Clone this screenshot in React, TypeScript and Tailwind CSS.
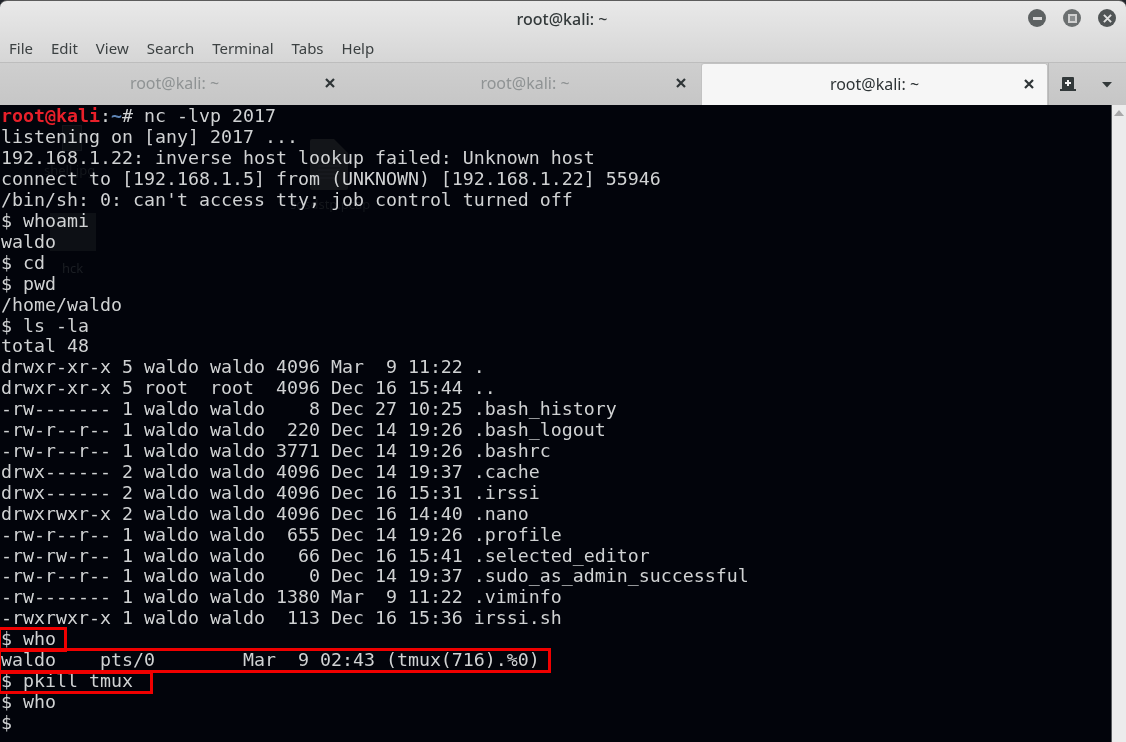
const lines: string[] = [
  "listening on [any] 2017 ...",
  "192.168.1.22: inverse host lookup failed: Unknown host",
  "connect to [192.168.1.5] from (UNKNOWN) [192.168.1.22] 55946",
  "/bin/sh: 0: can't access tty; job control turned off",
  "$ whoami",
  "waldo",
  "$ cd",
  "$ pwd",
  "/home/waldo",
  "$ ls -la",
  "total 48",
  "drwxr-xr-x 5 waldo waldo 4096 Mar  9 11:22 .",
  "drwxr-xr-x 5 root  root  4096 Dec 16 15:44 ..",
  "-rw------- 1 waldo waldo    8 Dec 27 10:25 .bash_history",
  "-rw-r--r-- 1 waldo waldo  220 Dec 14 19:26 .bash_logout",
  "-rw-r--r-- 1 waldo waldo 3771 Dec 14 19:26 .bashrc",
  "drwx------ 2 waldo waldo 4096 Dec 14 19:37 .cache",
  "drwx------ 2 waldo waldo 4096 Dec 16 15:31 .irssi",
  "drwxrwxr-x 2 waldo waldo 4096 Dec 16 14:40 .nano",
  "-rw-r--r-- 1 waldo waldo  655 Dec 14 19:26 .profile",
  "-rw-rw-r-- 1 waldo waldo   66 Dec 16 15:41 .selected_editor",
  "-rw-r--r-- 1 waldo waldo    0 Dec 14 19:37 .sudo_as_admin_successful",
  "-rw------- 1 waldo waldo 1380 Mar  9 11:22 .viminfo",
  "-rwxrwxr-x 1 waldo waldo  113 Dec 16 15:36 irssi.sh",
  "$ who",
  "waldo    pts/0        Mar  9 02:43 (tmux(716).%0)",
  "$ pkill tmux",
  "$ who",
  "$",
];

function Tab({ active, width, closeRight, textPad }: { active?: boolean; width: string; closeRight: string; textPad: string }) {
  return (
    <div className={`${width} h-full flex items-center relative ${active ? "bg-[#f6f6f6] text-[#2e3436] rounded-t-[3px] border-x border-t border-[#c2c2c2]" : "text-[#8f9394]"}`}>
      <span className={`flex-1 text-center relative top-[-1px] ${textPad}`}>root@kali: ~</span>
      <svg viewBox="0 0 10 10" className={`absolute ${closeRight} top-[15px] w-[10px] h-[10px]`}>
        <path d="M1 1 L9 9 M9 1 L1 9" stroke="#2e3436" strokeWidth="2.2" fill="none" />
      </svg>
    </div>
  );
}

function Circle({ children, bg }: { children: React.ReactNode; bg: string }) {
  return <div className={`w-[18px] h-[18px] rounded-full flex items-center justify-center ${bg}`}>{children}</div>;
}

export default function App() {
  return (
    <div className="w-[1126px] h-[742px] overflow-hidden flex flex-col bg-[#20242a] blur-[0.35px] font-['Noto_Sans','Open_Sans',sans-serif]">
      <div className="rounded-t-[7px] border-t border-[#5c5c5c] bg-gradient-to-b from-[#e9e9e9] to-[#d6d6d6] h-[62px] shrink-0 flex flex-col">
        <div className="h-[35px] flex items-center justify-center relative">
          <span className="text-[16px] font-medium text-[#33393a] relative left-[-1px]">root@kali: ~</span>
          <div className="absolute right-[10px] top-[8px] flex gap-[17px]">
            <Circle bg="bg-[#5d6162]">
              <div className="w-[9px] h-[3px] bg-[#d8d8d8]" />
            </Circle>
            <Circle bg="bg-[#6b6f70]">
              <div className="w-[9px] h-[9px] border-2 border-[#cfcfcf] bg-[#8a8d8e]" />
            </Circle>
            <Circle bg="bg-[#505455]">
              <svg viewBox="0 0 10 10" className="w-[9px] h-[9px]">
                <path d="M1 1 L9 9 M9 1 L1 9" stroke="#e0e0e0" strokeWidth="2.2" fill="none" />
              </svg>
            </Circle>
          </div>
        </div>
        <div className="h-[26px] flex items-start pl-[9px] gap-[18px] text-[15px] leading-[24px] text-[#3c4142]">
          <span>File</span>
          <span>Edit</span>
          <span>View</span>
          <span>Search</span>
          <span>Terminal</span>
          <span>Tabs</span>
          <span>Help</span>
        </div>
      </div>
      <div className="h-[43px] shrink-0 bg-gradient-to-b from-[#cfcfcf] to-[#c6c6c6] border-t border-[#bdbdbd] flex text-[16px]">
        <Tab width="w-[351px]" closeRight="right-[16px]" textPad="pr-[2px]" />
        <Tab width="w-[350px]" closeRight="right-[15px]" textPad="pr-[2px]" />
        <Tab width="w-[347px]" closeRight="right-[13px]" textPad="" active />
        <div className="flex-1 relative flex items-center border-l border-[#b5b5b5]">
          <svg viewBox="0 0 18 16" className="absolute left-[10px] top-[13px] w-[18px] h-[16px]">
            <path d="M3 2 Q3 1 4 1 H14 Q15 1 15 2 V13 H17 V15 H1 V13 H3 Z" fill="#33393a" />
            <path d="M9 4 V10 M6 7 H12" stroke="#f2f2f2" strokeWidth="2" />
          </svg>
          <svg viewBox="0 0 12 7" className="absolute left-[52px] top-[18px] w-[12px] h-[7px]">
            <path d="M1 1 H11 L6 6.5 Z" fill="#33393a" />
          </svg>
        </div>
      </div>
      <div className="flex-1 flex min-h-0">
        <div className="flex-1 relative bg-[#02040b] overflow-hidden">
          <div className="absolute left-[62px] top-[20px] w-[20px] h-[26px] border border-[#12151b] bg-[#0a0d12]" />
          <div className="absolute left-[44px] top-[56px] text-[13px] text-[#14171c]">shell.jpg</div>
          <svg viewBox="0 0 38 51" className="absolute left-[310px] top-[34px] w-[38px] h-[51px]">
            <path d="M0 2 Q0 0 2 0 H24 L38 14 V49 Q38 51 36 51 H2 Q0 51 0 49 Z" fill="#131519" />
            <path d="M8 27 H30 M8 31 H30 M8 35 H30 M8 39 H24" stroke="#1d1f24" strokeWidth="1" />
          </svg>
          <div className="absolute left-[290px] top-[90px] text-[13px] text-[#14171c]">sdsdstp.pcap</div>
          <div className="absolute left-[50px] top-[108px] w-[46px] h-[38px] bg-[#0d1015]" />
          <div className="absolute left-[62px] top-[154px] text-[13px] text-[#1b1e23]">hck</div>
          <div className="relative h-full pt-[1.5px] pl-[1px] font-['DejaVu_Sans_Mono','Liberation_Mono',monospace] text-[18.27px] leading-[20.9px] text-[#d0d2d3] whitespace-pre">
            <div className="relative top-[-1px]">
              <span className="text-[#e8202a] font-bold">root@kali</span>
              <span>:</span>
              <span className="text-[#5d84b5] font-bold">~</span>
              <span># nc -lvp 2017</span>
            </div>
            {lines.map((l, i) => (
              <div key={i}>{l}</div>
            ))}
          </div>
          <div className="absolute left-[-2px] top-[522px] w-[69px] h-[25px] border-[3px] border-[#f00000]" />
          <div className="absolute left-[-2px] top-[543px] w-[553px] h-[25px] border-[3px] border-[#f00000]" />
          <div className="absolute left-[-2px] top-[566px] w-[155px] h-[23px] border-[3px] border-[#f00000]" />
        </div>
        <div className="w-[15px] shrink-0 bg-[#ececec] border-l border-[#5a5d5f] relative">
          <svg viewBox="0 0 10 6" className="absolute left-[2px] top-[5px] w-[10px] h-[6px]">
            <path d="M5 0 L10 6 H0 Z" fill="#a8a8a8" />
          </svg>
        </div>
      </div>
    </div>
  );
}
